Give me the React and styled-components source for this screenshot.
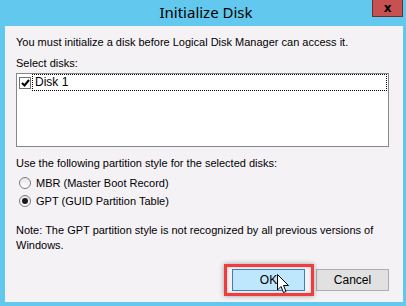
import React from "react";
import styled, { createGlobalStyle } from "styled-components";

const GlobalStyle = createGlobalStyle`
  html, body {
    margin: 0;
    padding: 0;
    background: #63c8ee;
  }
  body {
    font-family: "Liberation Sans", Arial, sans-serif;
    font-size: 11px;
    color: #000;
  }
`;

const Window = styled.div`
  width: 406px;
  height: 306px;
  background: #63c8ee;
  display: flex;
  flex-direction: column;
  overflow: hidden;
`;

const TitleBar = styled.div`
  height: 26px;
  display: grid;
  grid-template-columns: 1fr auto 1fr;
  align-items: start;
`;

const Title = styled.div`
  grid-column: 2;
  font-family: "Noto Sans", "Open Sans", sans-serif;
  font-size: 15px;
  line-height: 24px;
  color: #000;
  padding-left: 6px;
`;

const CloseButton = styled.div`
  grid-column: 3;
  justify-self: end;
  width: 31px;
  height: 17px;
  margin-right: 3px;
  box-sizing: border-box;
  background: #c75050;
  border: 1px solid #6b2d2d;
  border-top: none;
  display: flex;
  align-items: center;
  justify-content: center;
  font-family: "DejaVu Sans", sans-serif;
  font-weight: bold;
  font-size: 12px;
  color: #000;
`;

const Client = styled.div`
  flex: 1;
  margin: 0 3px 4px 5px;
  background: #f5f2f6;
  padding: 10px 14px 0 11px;
  display: flex;
  flex-direction: column;
`;

const Text = styled.div`
  line-height: ${(p) => p.lh || 13}px;
  margin-top: ${(p) => p.mt || 0}px;
  white-space: nowrap;
`;

const ListBox = styled.div`
  margin-top: 3px;
  height: 74px;
  box-sizing: border-box;
  border: 1px solid #828790;
  background: #fff;
  padding: 0 1px;
`;

const ListRow = styled.div`
  display: flex;
  align-items: center;
  height: 17px;
`;

const CheckBox = styled.div`
  width: 12px;
  height: 12px;
  box-sizing: border-box;
  border: 1px solid #707070;
  background: #fff;
  margin: 1px 1px 0 1px;
  display: flex;
  align-items: center;
  justify-content: center;
`;

const FocusLabel = styled.div`
  flex: 1;
  height: 17px;
  box-sizing: border-box;
  border: 1px dotted #000;
  padding-left: 2px;
  font-size: 12px;
  line-height: 15px;
`;

const RadioRow = styled.div`
  display: flex;
  align-items: center;
  height: 14px;
  margin-top: ${(p) => p.mt}px;
  padding-left: 3px;
`;

const Radio = styled.div`
  width: 12px;
  height: 12px;
  box-sizing: border-box;
  border-radius: 50%;
  border: 1px solid #7a7a7a;
  background: linear-gradient(#e6e6e6, #ffffff);
  margin-right: 5px;
  display: flex;
  align-items: center;
  justify-content: center;
  &::after {
    content: "";
    display: ${(p) => (p.checked ? "block" : "none")};
    width: 6px;
    height: 6px;
    border-radius: 50%;
    background: #1a1a1a;
  }
`;

const ButtonRow = styled.div`
  margin-top: 16px;
  display: flex;
  justify-content: flex-end;
  gap: 11px;
`;

const Highlight = styled.div`
  position: relative;
  display: flex;
`;

const Frame = styled.div`
  position: absolute;
  left: -8px;
  right: -9px;
  top: -5px;
  bottom: -5px;
  border: 3px solid #ef3d3d;
  box-shadow: 0 0 5px rgba(0, 0, 0, 0.35), inset 0 0 3px rgba(0, 0, 0, 0.2);
  pointer-events: none;
`;

const Button = styled.div`
  width: 73px;
  height: 22px;
  box-sizing: border-box;
  border: 1px solid ${(p) => (p.primary ? "#3c7fb1" : "#adadad")};
  background: ${(p) => (p.primary ? "#bee6fd" : "#e1e1e1")};
  display: flex;
  align-items: center;
  justify-content: center;
  font-size: 12px;
`;

const Cursor = styled.svg`
  position: absolute;
  left: 45px;
  top: 5px;
`;

export default function App() {
  return (
    <>
      <GlobalStyle />
      <Window>
        <TitleBar>
          <Title>Initialize Disk</Title>
          <CloseButton>x</CloseButton>
        </TitleBar>
        <Client>
          <Text>
            You must initialize a disk before Logical Disk Manager can access it.
          </Text>
          <Text mt={8}>Select disks:</Text>
          <ListBox>
            <ListRow>
              <CheckBox>
                <svg width="9" height="8" viewBox="0 0 9 8">
                  <path d="M1 4 L3.5 6.5 L8 1" stroke="#000" strokeWidth="2" fill="none" />
                </svg>
              </CheckBox>
              <FocusLabel>Disk 1</FocusLabel>
            </ListRow>
          </ListBox>
          <Text mt={10}>Use the following partition style for the selected disks:</Text>
          <RadioRow mt={6}>
            <Radio />
            MBR (Master Boot Record)
          </RadioRow>
          <RadioRow mt={4}>
            <Radio checked />
            GPT (GUID Partition Table)
          </RadioRow>
          <Text mt={15} lh={15}>
            Note: The GPT partition style is not recognized by all previous versions of
            <br />
            Windows.
          </Text>
          <ButtonRow>
            <Highlight>
              <Button primary>OK</Button>
              <Frame />
              <Cursor width="13" height="21" viewBox="0 0 13 21">
                <path
                  d="M0.5 0.5 L0.5 16 L4 12.5 L6.5 18.5 L9 17.5 L6.5 11.5 L11.5 11.5 Z"
                  fill="#fff"
                  stroke="#000"
                  strokeWidth="1"
                  strokeLinejoin="round"
                />
              </Cursor>
            </Highlight>
            <Button>Cancel</Button>
          </ButtonRow>
        </Client>
      </Window>
    </>
  );
}
